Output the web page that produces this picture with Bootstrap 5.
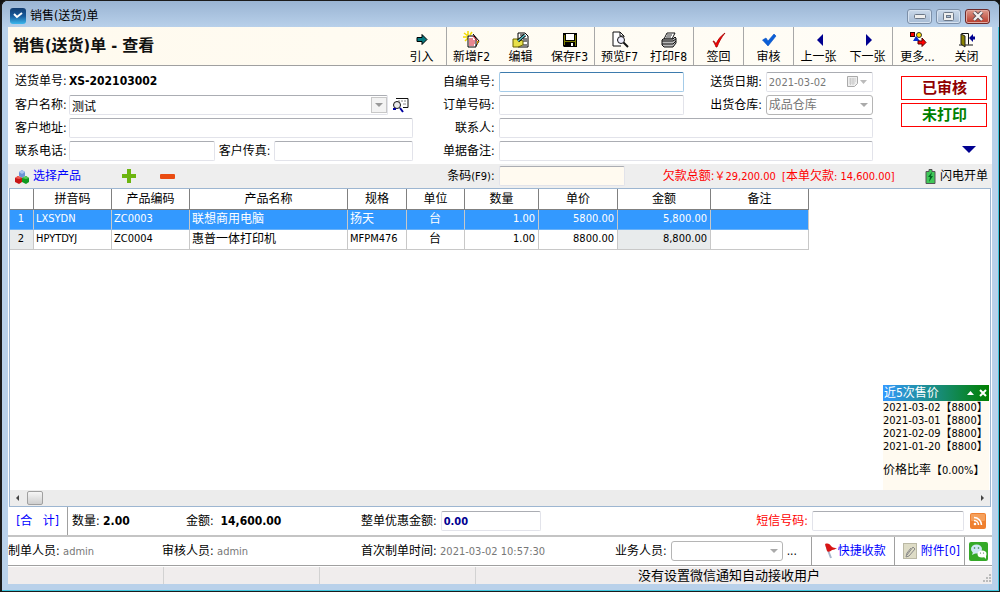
<!DOCTYPE html>
<html lang="zh-CN">
<head>
<meta charset="utf-8">
<meta name="viewport" content="width=device-width, initial-scale=1">
<title>销售(送货)单</title>
<link href="https://cdn.jsdelivr.net/npm/bootstrap@5.3.0/dist/css/bootstrap.min.css" rel="stylesheet">
<style>
body{font-family:"DejaVu Sans Condensed","Noto Sans CJK SC",sans-serif;font-size:12px;line-height:18px;color:#000;background:#111;min-height:100vh}
.win{min-height:100vh;border:1px solid #1b1b1b;border-left-width:2px;border-radius:7px 7px 0 0;background:#b9d1ea;box-shadow:inset -1px -1px 0 #3fc6dd;padding:0 7px 7px 6px}
.titlebar{height:26px;margin:0 -7px 0 -6px;padding:4px 9px 0 8px;background:linear-gradient(#9ab4d3,#b8d0ea);border-radius:6px 6px 0 0}
.winbtn{height:15px;width:25px;padding:0;border:1px solid #7c8fa8;border-radius:3px;background:linear-gradient(#cbd9ea,#a5bad3);display:flex;align-items:center;justify-content:center;box-shadow:inset 0 0 0 1px #d6e2f0}
.winbtn.shut{border-color:#6d2a2a;background:linear-gradient(#dd9a8c,#b8392a);box-shadow:inset 0 0 0 1px #e3aaa0}
.toolbar{height:39px;background:linear-gradient(90deg,#fffaee,#fffdf7);border-bottom:1px solid #a0a0a0;padding-left:5px;padding-right:1px}
.toolbar h1{font-size:16px;line-height:24px;font-weight:700;margin:0;color:#111}
.toolgroup{border-left:1px solid #a8a8a8}
.tool{width:49px;border:0;background:none;padding:4px 0 0;display:flex;flex-direction:column;align-items:center;white-space:nowrap;color:#000}
.tool svg{width:18px;height:18px;flex:none}
.tool span{line-height:16px}
.formgrid{display:grid;grid-template-columns:54px 343fr 86px 185fr 82px 107fr 119px;column-gap:0;padding-left:7px}
.fields{grid-template-rows:repeat(4,20px);row-gap:3px;padding-top:6px;padding-bottom:3px;background:#fff}
.formgrid label{line-height:20px;white-space:nowrap}
.stamps{grid-area:1/7/5/8;row-gap:3px}
.wide{grid-column:4/7}
.lab-r{text-align:right;padding-right:4px}
.box{height:20px;min-width:0;width:100%;border:1px solid #e2e3ea;border-top-color:#abadb3;border-radius:2px;background:#fff;padding:0 3px 0 2px;font-size:12px;line-height:16px;color:#000}
.box:disabled{color:#777;opacity:1}
.box:focus{outline:0}
.box.active-box{border-color:#a4cbe8;border-top-color:#3d7bad}
.num{font-size:11px}
select.pick{appearance:none;border:1px solid #b5b5b5;border-radius:3px;background:#fff url("data:image/svg+xml,%3Csvg xmlns='http://www.w3.org/2000/svg' width='8' height='5'%3E%3Cpath d='M0 0h8L4 4z' fill='%23aaa'/%3E%3C/svg%3E") no-repeat right 4px center}
.dropbtn{position:absolute;right:1px;top:2px;width:16px;height:16px;border:1px solid #c8c8c8;background:#f3f3f3;padding:0;display:flex;align-items:center;justify-content:center}
.plainbtn{border:0;background:none;padding:0;display:flex;align-items:center;color:#000}
.datebtn{position:absolute;right:5px;top:3px}
.stamp{width:86px;height:24px;border:1px solid #f00;font-size:15px;line-height:22px;font-weight:700;text-align:center;background:#fff}
.strip{background:#eee;min-height:24px;align-items:center}
.addbtn{margin-left:41px}
a.cmd{color:#00f;text-decoration:none;white-space:nowrap}
.client{background:#fff}
.gridbox{border:1px solid #9db6d1;margin:0 1px;background:#fff;min-height:240px}
.goods{table-layout:fixed;width:799px;border-collapse:separate;border-spacing:0;line-height:18px}
.goods th{height:21px;padding:0;text-align:center;font-weight:400;border-right:1px solid #808080;border-bottom:1px solid #808080}
.goods td{height:20px;padding:0 3px 1px 2px;border-right:1px solid #c8c8c8;border-bottom:1px solid #c8c8c8;white-space:nowrap;font-size:11px}
.goods td.cn{font-size:12px}
.goods td.idx{background:#e8ebec;text-align:center}
.goods tr.sel td{background:#3399ff;color:#fff;border-bottom-color:#6ab2f8}
.goods td.dim{background:#e8ebec}
.r{text-align:right}.c{text-align:center}
.hscroll{height:16px;background:#ececec;padding:0 4px}
.thumb{width:16px;height:14px;border:1px solid #a0a0a0;border-radius:2px;background:linear-gradient(#f6f6f6,#cfcfcf)}
.price{position:absolute;right:1px;bottom:16px;width:106px;height:105px;background:#fffaf0}
.pricehead{height:16px;line-height:16px;color:#fff;background:linear-gradient(90deg,#3399ff,#008000);padding:0 2px 0 1px}
.price ul,.price p{margin:0;line-height:13px;font-size:11px;white-space:nowrap}
.price p{padding-top:11px}
.sumrow{min-height:30px;border-bottom:2px solid #c4c4c4}
.rssbtn{margin:0 6px}
.userrow{min-height:29px;border-bottom:1px solid #a0a0a0}
.vline{border-left:1px solid #a0a0a0;align-self:stretch;display:flex;align-items:center}
.w154{flex:0 1 154px}.w199{flex:0 1 199px}.w254{flex:0 1 254px}
.w60{flex:0 0 59px}.w119{flex:0 1 119px}.w175{flex:0 1 175px}
.status{height:18px;background:#f0eded;line-height:17px;font-size:13px;border-top:1px solid #fff}
.status .cell{flex:0 1 156px;border-right:1px solid #d2d2d2}
.gray{color:#777}
</style>
</head>
<body>
<div class="win d-flex flex-column">
  <header class="titlebar d-flex align-items-center">
    <svg width="16" height="16" viewBox="0 0 16 16"><defs><linearGradient id="ap" x2="0" y2="1"><stop stop-color="#123c70"/><stop offset=".5" stop-color="#185a9c"/><stop offset="1" stop-color="#3bb8ee"/></linearGradient></defs><rect width="16" height="16" rx="3" fill="url(#ap)"/><path d="M4 6l3 3 5-4" fill="none" stroke="#fff" stroke-width="2"/></svg>
    <span class="ms-1">销售(送货)单</span>
    <div class="d-flex gap-1 ms-auto">
      <button class="winbtn" aria-label="最小化"><svg width="12" height="5"><rect x=".5" y=".5" width="11" height="4" rx="1" fill="#eee" stroke="#6b7787"/></svg></button>
      <button class="winbtn" aria-label="最大化"><svg width="11" height="9"><rect x=".5" y=".5" width="10" height="8" rx="1" fill="#eee" stroke="#6b7787"/><rect x="3.5" y="3.5" width="4" height="2" fill="#a9bcd4" stroke="#6b7787"/></svg></button>
      <button class="winbtn shut" aria-label="关闭窗口"><svg width="12" height="10" viewBox="0 0 12 10"><path d="M2 1l8 8M10 1L2 9" stroke="#594a50" stroke-width="4"/><path d="M2 1l8 8M10 1L2 9" stroke="#f3eeee" stroke-width="2.4"/></svg></button>
    </div>
  </header>

  <main class="client flex-grow-1 d-flex flex-column">
    <div class="toolbar d-flex">
      <h1 class="align-self-center me-auto text-nowrap">销售(送货)单 - 查看</h1>
      <div class="toolgroup border-start-0 d-flex">
        <button class="tool"><svg viewBox="0 0 18 18"><path d="M4 6.500h5V3.500l5 5-5 5v-3H4z" fill="#067a80" stroke="#000"/></svg><span>引入</span></button>
      </div>
      <div class="toolgroup d-flex">
        <button class="tool"><svg viewBox="0 0 18 18"><path d="M1 2l4 3M5 0v4M0 6h4M2 10l3-3M9 1L7 4" stroke="#f2dc00" stroke-width="1.500"/><path d="M5 5h6l2 2v9H5z" fill="#fff" stroke="#000"/><path d="M6 8h4M6 10h6M6 12h6M6 14h5" stroke="#d01020"/><path d="M10 3l6 7-3 5" fill="none" stroke="#000"/><path d="M10 5l4 5" stroke="#d01020"/><path d="M14 10l2 0-2 4z" fill="#c80"/></svg><span>新增F2</span></button>
        <button class="tool"><svg viewBox="0 0 18 18"><path d="M6 2h7l3 3v11H6z" fill="#fff" stroke="#000"/><path d="M8 4h4M11 8h4M11 10h4M11 14h4" stroke="#000"/><path d="M1 8h6l4 2v4l-5 2H1z" fill="#e8e04a" stroke="#666000"/><path d="M6 10l7-6" stroke="#000" stroke-width="3"/><path d="M6 10l7-6" stroke="#5cc6cf" stroke-width="1.500"/></svg><span>编辑</span></button>
        <button class="tool"><svg viewBox="0 0 18 18"><path d="M2 2h14v14H3l-1-1z" fill="#000"/><path d="M14.500 4v11M3.500 4v10M4 10.500h10" stroke="#7e7e00"/><path d="M5 3h8v6H5zM10 12h2v3h-2z" fill="#fff"/></svg><span>保存F3</span></button>
      </div>
      <div class="toolgroup d-flex">
        <button class="tool"><svg viewBox="0 0 18 18"><path d="M13 6V5L9 1H2v14h8M9 1v4h4" fill="#fff" stroke="#111"/><circle cx="10" cy="9" r="3.500" fill="#eef" stroke="#111"/><path d="M12.500 11.500L17 16" stroke="#111" stroke-width="2"/></svg><span>预览F7</span></button>
        <button class="tool"><svg viewBox="0 0 18 18"><path d="M7 2h8l-3 6H4z" fill="#fff" stroke="#111"/><path d="M7 4h5M6 6h5" stroke="#333"/><path d="M3 8h10l2-2 1 1v5l-3 4H4l-2-2V9z" fill="#bbb" stroke="#111"/><path d="M2 10h11l3-2M2 13h11l3-3" stroke="#111" fill="none"/></svg><span>打印F8</span></button>
      </div>
      <div class="toolgroup d-flex">
        <button class="tool"><svg viewBox="0 0 18 18"><path d="M3 10c2 0 2 2 3 3C8 8 11 5 15 2c-4 5-6 9-8 14H6C5 13 4 12 3 10z" fill="#f00" stroke="#a00000" stroke-width=".8"/></svg><span>签回</span></button>
      </div>
      <div class="toolgroup d-flex">
        <button class="tool"><svg viewBox="0 0 18 18"><path d="M2.500 9L6 7l2 3 6-7 2 2-8 10z" fill="#0a5fd8" stroke="#0a4fc0" stroke-width=".6"/></svg><span>审核</span></button>
      </div>
      <div class="toolgroup d-flex">
        <button class="tool"><svg viewBox="0 0 18 18"><path d="M13 3v12L7 9z" fill="#000090"/></svg><span>上一张</span></button>
        <button class="tool"><svg viewBox="0 0 18 18"><path d="M7 3v12l6-6z" fill="#000090"/></svg><span>下一张</span></button>
      </div>
      <div class="toolgroup d-flex">
        <button class="tool"><svg viewBox="0 0 18 18"><rect x="1.500" y="1.500" width="4" height="4" fill="#f00" stroke="#300"/><circle cx="10" cy="4" r="2.500" fill="#ffe000" stroke="#333"/><path d="M7 5l4 5H4z" fill="#0a2bd0"/><path d="M9 10h4V7l4 4.500-4 4V13H9z" fill="#f00" stroke="#500"/></svg><span>更多...</span></button>
        <button class="tool"><svg viewBox="0 0 18 18"><path d="M3.500 2.500h7v11M1 14h14" fill="none" stroke="#111"/><path d="M3 3l4 2v11l-4-3z" fill="#8a8200" stroke="#222"/><path d="M11 7l4-4v2.500h2v3h-2V11z" fill="#000090"/></svg><span>关闭</span></button>
      </div>
    </div>

    <form class="formgrid fields" onsubmit="return false">
      <span class="text-nowrap">送货单号:</span><b class="text-nowrap">XS-202103002</b>
      <label class="lab-r" for="ownno">自编单号:</label><input id="ownno" class="box active-box" type="text">
      <label class="lab-r" for="date">送货日期:</label>
      <div class="position-relative"><input id="date" class="box num d-block" type="text" value="2021-03-02" disabled>
        <button type="button" class="plainbtn datebtn" aria-label="选择日期"><svg width="22" height="13" viewBox="0 0 22 13"><path d="M1.500 1.500h10v7l-3 3h-7z" fill="#eee" stroke="#aaa"/><path d="M3 4h7M3 6h7M3 8h6M4.500 3v7M7 3v7" stroke="#ccc"/><path d="M14 5h7l-3.500 4z" fill="#bbb"/></svg></button></div>
      <div class="stamps d-flex flex-column align-items-center ps-4">
        <div class="stamp mt-1" style="color:#900000">已审核</div>
        <div class="stamp mb-auto" style="color:#008000">未打印</div>
        <button type="button" class="plainbtn align-self-end me-3 pb-2" aria-label="展开"><svg width="14" height="7"><path d="M0 0h14L7 7z" fill="#000090"/></svg></button>
      </div>

      <label for="cust">客户名称:</label>
      <div class="d-flex align-items-center"><div class="position-relative flex-grow-1"><input id="cust" class="box d-block" type="text" value="测试"><button type="button" class="dropbtn" aria-label="下拉"><svg width="8" height="5"><path d="M0 0h8L4 4z" fill="#999"/></svg></button></div>
        <button type="button" class="plainbtn ms-1 me-1" aria-label="查找客户"><svg width="17" height="16" viewBox="0 0 17 16"><path d="M4 1.500h12v9h-5" fill="#fff" stroke="#111"/><path d="M6 4h2M9 4h2M12 4h2M11 7h3" stroke="#888"/><circle cx="5" cy="8" r="3.500" fill="#e8e8e8" stroke="#111"/><path d="M4 12H1M8 11l3 4" stroke="#0000a0" stroke-width="2"/></svg></button></div>
      <label class="lab-r" for="order">订单号码:</label><input id="order" class="box" type="text">
      <label class="lab-r" for="store">出货仓库:</label><select id="store" class="box pick" disabled><option>成品仓库</option></select>

      <label for="addr">客户地址:</label><input id="addr" class="box" type="text">
      <label class="lab-r" for="contact">联系人:</label><input id="contact" class="box wide" type="text">

      <label for="tel">联系电话:</label>
      <div class="d-flex"><input id="tel" class="box" style="flex:146 1 0" type="text"><label class="px-1" for="fax">客户传真:</label><input id="fax" class="box" style="flex:138 1 0" type="text"></div>
      <label class="lab-r" for="memo">单据备注:</label><input id="memo" class="box wide" type="text">
    </form>

    <div class="formgrid strip">
      <div class="d-flex align-items-center" style="grid-column:1/3">
        <svg width="14" height="15" viewBox="0 0 14 15"><path d="M4 3l3-2 3 2v4L7 9 4 7z" fill="#6b93d6"/><path d="M4 3l3-2 3 2-3 2z" fill="#a8c4f0"/><path d="M0 9l3-2 4 2v4l-3 2-4-2z" fill="#c81414"/><path d="M0 9l3-2 4 2-3 1z" fill="#f05a50"/><path d="M7 9l4-2 3 2v4l-3 2-4-2z" fill="#109a20"/><path d="M7 9l4-2 3 2-3 1z" fill="#58cc58"/></svg>
        <a class="cmd ms-1" href="#">选择产品</a>
        <button class="plainbtn addbtn" aria-label="添加"><svg width="14" height="14" viewBox="0 0 14 14"><path d="M5 0h4v5h5v4H9v5H5V9H0V5h5z" fill="#6cb510"/></svg></button>
        <button class="plainbtn ms-4" aria-label="删除"><svg width="15" height="5"><rect width="15" height="5" rx="1" fill="#ea4c12"/></svg></button>
      </div>
      <label class="lab-r" for="code">条码<span class="num">(F9)</span>:</label>
      <div class="d-flex align-items-center" style="grid-column:4/8">
        <input id="code" class="box" style="flex:0 1 126px;background:#fffaf0" type="text">
        <span class="text-nowrap num mx-auto ps-2" style="color:#f00"><span style="font-size:12px">欠款总额:</span>￥29,200.00&nbsp; [<span style="font-size:12px">本单欠款</span>: 14,600.00]</span>
        <button class="plainbtn pe-1 text-nowrap"><svg class="me-1" width="11" height="15" viewBox="0 0 11 15"><path d="M4 .500h3v2h3v12H1v-12h3z" fill="#3fc858" stroke="#555"/><path d="M7 3L3 8h2l-1 5 4-6H6z" fill="#062"/></svg>闪电开单</button>
      </div>
    </div>

    <section class="gridbox position-relative flex-grow-1 d-flex flex-column">
      <div class="flex-grow-1 overflow-hidden">
        <table class="goods">
          <colgroup><col style="width:24px"><col style="width:78px"><col style="width:78px"><col style="width:158px"><col style="width:59px"><col style="width:58px"><col style="width:74px"><col style="width:79px"><col style="width:93px"><col style="width:98px"></colgroup>
          <thead><tr><th></th><th>拼音码</th><th>产品编码</th><th>产品名称</th><th>规格</th><th>单位</th><th>数量</th><th>单价</th><th>金额</th><th>备注</th></tr></thead>
          <tbody>
            <tr class="sel"><td class="c">1</td><td>LXSYDN</td><td>ZC0003</td><td class="cn">联想商用电脑</td><td class="cn">扬天</td><td class="cn c">台</td><td class="r">1.00</td><td class="r">5800.00</td><td class="r">5,800.00</td><td></td></tr>
            <tr><td class="idx">2</td><td>HPYTDYJ</td><td>ZC0004</td><td class="cn">惠普一体打印机</td><td>MFPM476</td><td class="cn c">台</td><td class="r">1.00</td><td class="r">8800.00</td><td class="r dim">8,800.00</td><td></td></tr>
          </tbody>
        </table>
      </div>
      <div class="hscroll d-flex align-items-center">
        <svg width="9" height="8"><path d="M5 1v6L2 4z" fill="#444"/></svg><div class="thumb ms-1"></div>
        <svg class="ms-auto" width="6" height="8"><path d="M1 1v6l3-3z" fill="#444"/></svg>
      </div>
      <aside class="price">
        <div class="pricehead d-flex align-items-center"><span>近5次售价</span>
          <button class="plainbtn ms-auto me-1" aria-label="收起"><svg width="8" height="5"><path d="M0 4h7L3.500 0z" fill="#fff"/></svg></button>
          <button class="plainbtn" aria-label="关闭"><svg width="8" height="8"><path d="M1 1l6 6M7 1L1 7" stroke="#fff" stroke-width="2"/></svg></button></div>
        <ul class="list-unstyled"><li>2021-03-02【8800】</li><li>2021-03-01【8800】</li><li>2021-02-09【8800】</li><li>2021-01-20【8800】</li></ul>
        <p><span style="font-size:12px">价格比率</span>【0.00%】</p>
      </aside>
    </section>

    <div class="sumrow d-flex align-items-center text-nowrap">
      <a class="cmd w60 text-center" href="#">[合&nbsp;&nbsp; 计]</a>
      <div class="vline w119 ps-1">数量:&nbsp; <b>2.00</b></div>
      <div class="w175">金额:&nbsp; <b>14,600.00</b></div>
      <label for="disc" class="me-1">整单优惠金额:</label>
      <input id="disc" class="box fw-bold num" style="flex:0 1 100px;color:#000090" type="text" value="0.00">
      <label for="sms" class="ms-auto me-1" style="color:#f00">短信号码:</label>
      <input id="sms" class="box" style="flex:0 1 152px" type="text">
      <button class="plainbtn rssbtn" aria-label="发送短信"><svg width="16" height="16" viewBox="0 0 16 16"><rect width="16" height="16" rx="2" fill="#ef8030"/><rect x="1" y="1" width="14" height="7" rx="1" fill="#f5a05c"/><circle cx="5" cy="11" r="1.300" fill="#fff"/><path d="M4 7.500a4.500 4.500 0 0 1 4.500 4.500M4 4.500A7.500 7.500 0 0 1 11.500 12" fill="none" stroke="#fff" stroke-width="1.500"/></svg></button>
    </div>
    <div class="userrow d-flex align-items-center text-nowrap">
      <div class="w154">制单人员: <span class="num gray">admin</span></div>
      <div class="w199">审核人员: <span class="num gray">admin</span></div>
      <div class="w254">首次制单时间: <span class="num gray">2021-03-02 10:57:30</span></div>
      <label for="clerk" class="me-1">业务人员:</label>
      <select id="clerk" class="box pick" style="flex:0 1 112px"><option></option></select>
      <button class="plainbtn ms-1 me-auto" aria-label="选择业务人员">...</button>
      <div class="vline ps-2 pe-2"><svg class="ms-1" width="14" height="16" viewBox="0 0 14 16"><path d="M2 2l5 13" stroke="#a9b4cc" stroke-width="2"/><path d="M1 1c3-1 5 0 6 2 2 2 4 2 6 2-2 1-3 2-5 2-2 2-4 2-5 1z" fill="#d81414"/></svg><a class="cmd" href="#">快捷收款</a></div>
      <div class="vline px-1"><svg class="ms-1 me-1" width="14" height="16" viewBox="0 0 14 16"><rect x=".5" y=".5" width="13" height="15" fill="#dedcc6" stroke="#bbb9a5"/><path d="M4 12l6-8 2 2-6 7-3 1 1-4 4-5" fill="none" stroke="#888"/></svg><a class="cmd" href="#">附件[0]</a></div>
      <div class="vline ps-1 pe-1"><button class="plainbtn" aria-label="微信"><svg width="19" height="19" viewBox="0 0 19 19"><rect width="19" height="19" rx="2" fill="#35a928"/><ellipse cx="7.500" cy="7" rx="5.500" ry="4.500" fill="#cfe6f5"/><path d="M4 10l-1 3 4-2z" fill="#cfe6f5"/><ellipse cx="13" cy="12" rx="4.500" ry="3.500" fill="#fff"/><path d="M14 14l3 3v-4z" fill="#fff"/><g fill="#357a40"><circle cx="5.500" cy="6" r=".8"/><circle cx="9.500" cy="6" r=".8"/><circle cx="11.500" cy="11" r=".6"/><circle cx="14.500" cy="11" r=".6"/></g></svg></button></div>
    </div>
    <footer class="status d-flex">
      <div class="cell"></div><div class="cell"></div><div class="cell"></div>
      <div class="flex-grow-1 text-center text-nowrap">没有设置微信通知自动接收用户</div>
      <svg class="align-self-end" width="10" height="10"><path d="M7 1h2M4 4h2M7 4h2M1 7h2M4 7h2M7 7h2" stroke="#bbb" stroke-width="2"/></svg>
    </footer>
  </main>
</div>
<script src="https://cdn.jsdelivr.net/npm/bootstrap@5.3.0/dist/js/bootstrap.bundle.min.js"></script>
</body>
</html>
